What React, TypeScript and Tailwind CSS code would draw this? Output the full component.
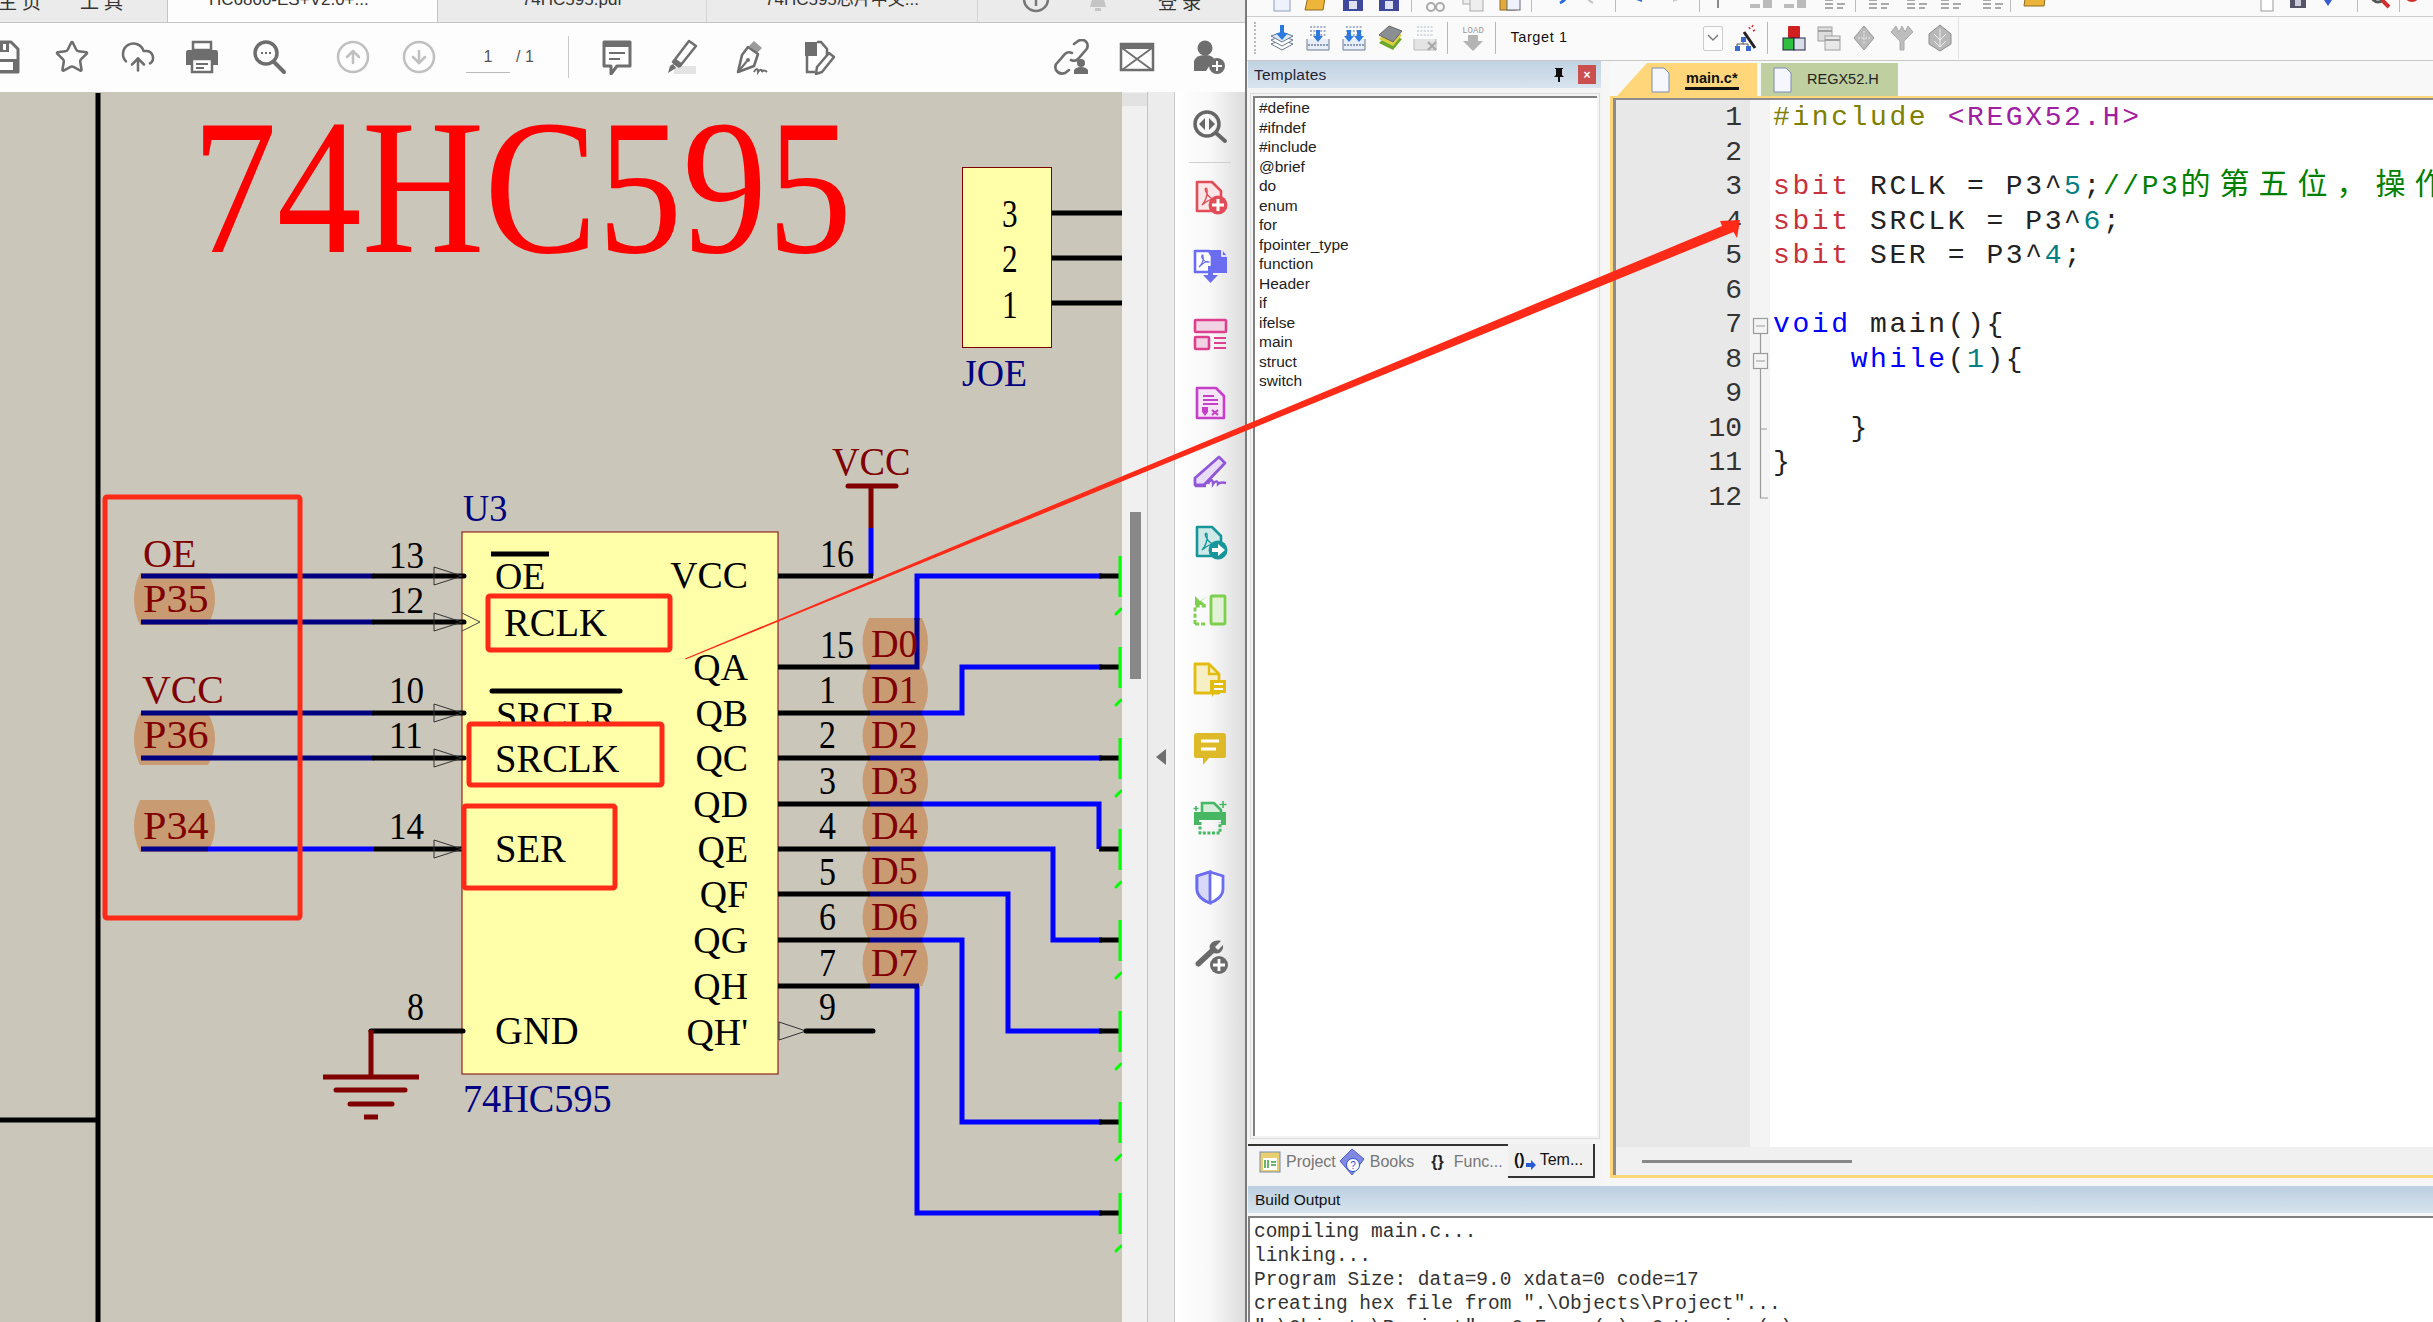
import React from "react";
import { CloudUpload, Star, CircleArrowUp, CircleArrowDown } from "lucide-react";

const G = "#6e6e6e";

type Slot = [number, number, React.ReactNode];
function Slots({ items, className = "" }: { items: Slot[]; className?: string }) {
  let prev = 0;
  return (
    <div className={"flex " + className}>
      {items.map(([c, w, node], i) => {
        const left = c - w / 2;
        const m = left - prev;
        prev = left + w;
        return (
          <div key={i} className="flex shrink-0 items-center justify-center" style={{ marginLeft: m, width: w }}>
            {node}
          </div>
        );
      })}
    </div>
  );
}

const I = ({ children, s = 36, v = 36 }: { children: React.ReactNode; s?: number; v?: number }) => (
  <svg width={s} height={s} viewBox={`0 0 ${v} ${v}`} className="shrink-0">
    {children}
  </svg>
);

/* ---------- PDF toolbar ---------- */
const SaveIco = () => (
  <I>
    <path d="M4 3H26L33 10V33H4Z" fill="none" stroke={G} strokeWidth="3" strokeLinejoin="round" />
    <rect x="10" y="3" width="14" height="10" fill={G} />
    <rect x="18" y="5" width="3" height="6" fill="#fff" />
    <rect x="4" y="20" width="29" height="13" fill={G} />
    <rect x="9" y="23" width="19" height="8" fill="#fff" />
  </I>
);
const PrintIco = () => (
  <I>
    <path d="M9 3H27V11H9Z" fill="none" stroke={G} strokeWidth="2.5" />
    <path d="M4 11H32Q34 11 34 14V26H28V21H8V26H2V14Q2 11 4 11Z" fill={G} />
    <rect x="8" y="20" width="20" height="13" fill="#fff" stroke={G} strokeWidth="2.5" />
    <path d="M12 25H24M12 29H20" stroke={G} strokeWidth="2" />
  </I>
);
const SearchIco = () => (
  <I>
    <circle cx="14" cy="14" r="11" fill="none" stroke={G} strokeWidth="3.5" />
    <path d="M22 23L32 33" stroke={G} strokeWidth="4" strokeLinecap="round" />
    <path d="M9 14H11M13 14H15M17 14H19" stroke={G} strokeWidth="2" />
  </I>
);
const CommentIco = () => (
  <I>
    <path d="M5 3H31V27H18L12 35V27H5Z" fill="#fff" stroke={G} strokeWidth="3" strokeLinejoin="round" />
    <path d="M5 3H31V8H5Z" fill={G} />
    <path d="M10 14H26M10 20H21" stroke={G} strokeWidth="2" />
  </I>
);
const HighlightIco = () => (
  <I>
    <rect x="12" y="27" width="22" height="8" fill="#e3e3e3" />
    <path d="M27 2L34 7L18 27L11 23Z" fill="none" stroke={G} strokeWidth="2.5" strokeLinejoin="round" />
    <path d="M14 20L21 25L17 29L11 25Z" fill={G} />
    <path d="M8 27L11 25L14 29L6 34Z" fill={G} />
  </I>
);
const NibIco = () => (
  <I>
    <path d="M22 2L30 9L25 14L17 7Z" fill="#9a9a9a" />
    <path d="M16 8L26 15L22 27L6 33L10 16Z" fill="none" stroke={G} strokeWidth="2.6" strokeLinejoin="round" />
    <path d="M6 33L15 22" stroke={G} strokeWidth="2" />
    <circle cx="16" cy="21" r="2" fill={G} />
    <path d="M22 33C24 29 26 29 26 33C28 30 30 30 30 33C31 31 33 31 35 33" fill="none" stroke={G} strokeWidth="2" />
  </I>
);
const StampIco = () => (
  <I>
    <path d="M6 3H18V17H6Z" fill={G} />
    <path d="M18 3H22L28 10V17" fill="none" stroke={G} strokeWidth="2.5" />
    <path d="M8 17V33H16" fill="none" stroke={G} strokeWidth="2.5" />
    <path d="M30 14L35 18L23 33L17 35L18 28Z" fill="none" stroke={G} strokeWidth="2.5" strokeLinejoin="round" />
  </I>
);
const LinkIco = () => (
  <I>
    <g fill="none" stroke={G} strokeWidth="2.6" strokeLinecap="round">
      <path d="M20 5L24 2Q30 -1 33 4Q35 9 31 12L24 20Q21 23 17 21" />
      <path d="M15 31L11 34Q5 36 2 31Q0 26 4 23L11 15Q14 12 18 14" />
    </g>
    <circle cx="27" cy="24" r="4" fill={G} />
    <path d="M20 35V31Q22 28 27 28Q32 28 34 31V35Z" fill={G} />
  </I>
);
const MailIco = () => (
  <I>
    <rect x="2" y="5" width="32" height="26" fill="none" stroke={G} strokeWidth="2.5" />
    <rect x="2" y="5" width="32" height="5" fill={G} />
    <path d="M3 9L33 31M33 9L3 31" stroke={G} strokeWidth="1.8" />
  </I>
);
const UserPlusIco = () => (
  <I>
    <circle cx="15" cy="9" r="7.5" fill={G} />
    <path d="M4 30V22Q6 16 15 16Q22 16 24 20L16 32H4Z" fill={G} />
    <circle cx="27" cy="27" r="8" fill={G} />
    <path d="M27 22V32M22 27H32" stroke="#fff" strokeWidth="2" />
  </I>
);

function PdfToolbar() {
  return (
    <div className="h-[69px] overflow-hidden bg-[#fdfdfd]">
      <Slots
        className="h-[69px] items-center pb-[1px]"
        items={[
          [3, 36, <SaveIco />],
          [72, 36, <Star size={36} stroke={G} strokeWidth={1.7} />],
          [138, 36, <CloudUpload size={36} stroke={G} strokeWidth={1.7} />],
          [202, 36, <PrintIco />],
          [270, 36, <SearchIco />],
          [353, 36, <CircleArrowUp size={36} stroke="#c0c0c0" strokeWidth={1.7} />],
          [419, 36, <CircleArrowDown size={36} stroke="#c0c0c0" strokeWidth={1.7} />],
          [
            502,
            72,
            <div className="flex w-[72px] items-center text-[16px] text-[#555]">
              <span className="flex h-[32px] w-[44px] items-center justify-center border-b border-[#bbb] pt-[1px]">1</span>
              <span className="ml-[6px] mb-[1px] whitespace-pre">/ 1</span>
            </div>,
          ],
          [568, 2, <div className="h-[42px] w-px bg-[#c8c8c8]" />],
          [617, 36, <CommentIco />],
          [680, 36, <HighlightIco />],
          [750, 36, <NibIco />],
          [817, 36, <StampIco />],
          [1072, 36, <LinkIco />],
          [1137, 36, <MailIco />],
          [1208, 36, <UserPlusIco />],
        ]}
      />
    </div>
  );
}

function PdfTabs() {
  return (
    <div className="flex h-[23px] overflow-hidden border-b border-[#c4c4c4] bg-[#ebebeb] text-[17px] leading-[20px] text-[#333]">
      <div className="flex w-[167px] items-start text-[19px]">
        <span className="-ml-[2px] -mt-[7px] w-[60px] shrink-0 tracking-[5px]">主页</span>
        <span className="ml-[22px] -mt-[7px] shrink-0 tracking-[5px]">工具</span>
      </div>
      <div className="flex h-[23px] w-[271px] items-start border-x border-[#c4c4c4] bg-[#fdfdfd] pl-[41px]">
        <span className="-mt-[10px] whitespace-pre">HC6800-ES+V2.0+...</span>
        <span className="-mt-[14px] ml-[22px] text-[#888]">×</span>
      </div>
      <div className="flex w-[269px] items-start justify-center border-r border-[#d4d4d4]">
        <span className="-mt-[10px]">74HC595.pdf</span>
      </div>
      <div className="flex w-[271px] items-start justify-center border-r border-[#d4d4d4]">
        <span className="-mt-[10px]">74HC595芯片中文...</span>
      </div>
      <svg width="30" height="22" viewBox="0 0 30 22" className="ml-[43px] shrink-0">
        <circle cx="15" cy="-1" r="12" fill="none" stroke="#777" strokeWidth="2.5" />
        <path d="M15 -2V6" stroke="#777" strokeWidth="2.5" />
      </svg>
      <svg width="30" height="22" viewBox="0 0 30 22" className="ml-[32px] shrink-0">
        <path d="M7 7L10 -4H20L23 7Z M12 8H18V11H12Z" fill="#c4c4c4" />
      </svg>
      <span className="ml-[45px] -mt-[7px] shrink-0 text-[19px] tracking-[5px]">登录</span>
    </div>
  );
}

/* ---------- Schematic ---------- */
const T = ({
  x,
  y,
  c = "#000",
  s = 39,
  sx = 0.97,
  a = "start",
  children,
}: {
  x: number;
  y: number;
  c?: string;
  s?: number;
  sx?: number;
  a?: "start" | "end";
  children: React.ReactNode;
}) => (
  <text transform={`translate(${x} ${y}) scale(${sx} 1)`} fontSize={s} fill={c} textAnchor={a}>
    {children}
  </text>
);
const L = ({ d, c = "#000", w = 5, cap = "butt" }: { d: string; c?: string; w?: number; cap?: "butt" | "round" }) => (
  <path d={d} fill="none" stroke={c} strokeWidth={w} strokeLinecap={cap} strokeLinejoin="miter" />
);
const Tri = ({ x, y, w = 28 }: { x: number; y: number; w?: number }) => (
  <path d={`M${x} ${y - 9}L${x + w} ${y}L${x} ${y + 9}Z`} fill="none" stroke="#333" strokeWidth="1" />
);
const RedBox = ({ x, y, w, h, fill = "none" }: { x: number; y: number; w: number; h: number; fill?: string }) => (
  <rect x={x} y={y} width={w} height={h} rx="2" fill={fill} stroke="#ff2a17" strokeWidth="5" />
);
const HL = "#c99b72";
const LeftBlob = ({ t }: { t: number }) => (
  <path d={`M140 ${t}H208Q222 ${t + 26} 208 ${t + 52}H140Q128 ${t + 26} 140 ${t}Z`} fill={HL} />
);
const RightBlob = ({ t, b }: { t: number; b: number }) => (
  <path d={`M869 ${t}H922Q934 ${(t + b) / 2} 922 ${b}H869Q856 ${(t + b) / 2} 869 ${t}Z`} fill={HL} />
);

const PINY = [667, 713, 758, 804, 849, 894, 940, 986];
const STUBS = [576, 667, 758, 849, 940, 1031, 1122, 1213];

function Schematic() {
  return (
    <svg width="1122" height="1230" viewBox="0 92 1122 1230" className="block shrink-0 bg-[#cac6ba] font-['Liberation_Serif',serif]">
      <L d="M98 93V1322" />
      <L d="M0 1120H98" />
      <T x={192} y={252} s={192} sx={0.884} c="#ff0000">74HC595</T>

      {/* JOE */}
      <rect x="962.5" y="167.5" width="89" height="180" fill="#ffffaa" stroke="#800000" />
      <L d="M1052 213H1122M1052 258H1122M1052 303H1122" />
      <T x={1002} y={227} s={39} sx={0.8}>3</T>
      <T x={1002} y={272} s={39} sx={0.8}>2</T>
      <T x={1002} y={318} s={39} sx={0.8}>1</T>
      <T x={962} y={386} c="#000080" sx={0.97}>JOE</T>

      {/* chip */}
      <T x={463} y={521} c="#000080" sx={0.93}>U3</T>
      <rect x="462" y="532" width="316" height="542" fill="#ffffaa" stroke="#800000" />
      <T x={463} y={1112} c="#000080" sx={0.98}>74HC595</T>

      {/* left highlights */}
      <LeftBlob t={573} />
      <LeftBlob t={713} />
      <LeftBlob t={800} />

      {/* left wires */}
      {[576, 622, 713, 758].map((y) => (
        <g key={y}>
          <L d={`M141 ${y}H374`} c="#000080" />
          <L d={`M374 ${y}H464`} cap="round" />
          <Tri x={434} y={y} />
        </g>
      ))}
      <L d="M141 849H208" c="#00008c" />
      <L d="M208 849H374" c="#0000ff" />
      <L d="M374 849H462" />
      <Tri x={434} y={849} />
      <path d="M462 613L480 622L462 631" fill="none" stroke="#444" strokeWidth="1" />

      {/* left labels */}
      <T x={143} y={567} c="#800000" sx={1.03}>OE</T>
      <T x={143} y={612} c="#800000" sx={1.08}>P35</T>
      <T x={142} y={703} c="#800000" sx={1.02}>VCC</T>
      <T x={143} y={748} c="#800000" sx={1.08}>P36</T>
      <T x={143} y={839} c="#800000" sx={1.08}>P34</T>
      <T x={389} y={568} sx={0.9}>13</T>
      <T x={389} y={613} sx={0.9}>12</T>
      <T x={389} y={703} sx={0.9}>10</T>
      <T x={389} y={748} sx={0.9}>11</T>
      <T x={389} y={839} sx={0.9}>14</T>

      {/* pin names */}
      <L d="M491 554H549" />
      <T x={495} y={589}>OE</T>
      <T x={504} y={636} sx={0.99}>RCLK</T>
      <L d="M492 691H620" cap="round" />
      <T x={496} y={728}>SRCLR</T>
      <T x={495} y={1044} sx={0.99}>GND</T>
      <RedBox x={488} y={596} w={182} h={54} />
      <RedBox x={469} y={724} w={193} h={61} fill="#ffffaa" />
      <RedBox x={464} y={806} w={151} h={82} fill="#ffffaa" />
      <T x={495} y={772} sx={0.99}>SRCLK</T>
      <T x={495} y={862} sx={0.99}>SER</T>

      {/* right labels */}
      <T x={748} y={588} a="end">VCC</T>
      {["QA", "QB", "QC", "QD", "QE", "QF", "QG", "QH"].map((n, i) => (
        <T key={n} x={748} y={PINY[i] + 13} a="end">
          {n}
        </T>
      ))}
      <T x={748} y={1045} a="end">QH'</T>

      {/* right highlights */}
      {PINY.map((b, i) => (
        <RightBlob key={b} t={i === 0 ? 618 : PINY[i - 1]} b={b} />
      ))}

      {/* VCC power */}
      <T x={832} y={475} c="#800000" sx={0.98}>VCC</T>
      <L d="M848 486H896" c="#800000" w={5} cap="round" />
      <L d="M871 486V528" c="#800000" />
      <L d="M871 528V576" c="#0000ff" />
      <L d="M778 576H873" />

      {/* right wires */}
      {PINY.map((y) => (
        <L key={y} d={`M778 ${y}H870`} />
      ))}
      <L d="M917 620V576H1102" c="#0000ff" />
      <L d="M870 667H917V618" c="#000090" />
      <L d="M922 713H962V667H1102" c="#0000ff" />
      <L d="M870 713H922" c="#000090" />
      <L d="M922 758H1102" c="#0000ff" />
      <L d="M870 758H922" c="#000090" />
      <L d="M922 804H1099V849" c="#0000ff" />
      <L d="M870 804H922" c="#000090" />
      <L d="M922 849H1053V940H1102" c="#0000ff" />
      <L d="M870 849H922" c="#000090" />
      <L d="M922 894H1008V1031H1102" c="#0000ff" />
      <L d="M870 894H922" c="#000090" />
      <L d="M922 940H962V1122H1102" c="#0000ff" />
      <L d="M870 940H922" c="#000090" />
      <L d="M917 986V1213H1102" c="#0000ff" />
      <L d="M870 986H919" c="#000090" />

      {/* right connector */}
      {STUBS.map((y) => (
        <g key={y}>
          <L d={`M1099 ${y}H1119`} />
          <L d={`M1120 ${y - 20}V${y + 21}`} c="#00ff00" w={3} />
          <L d={`M1116 ${y + 38}L1121 ${y + 33}`} c="#00ff00" w={3} cap="round" />
        </g>
      ))}

      {/* right numbers */}
      <T x={820} y={567} sx={0.87}>16</T>
      <T x={820} y={658} sx={0.87}>15</T>
      {[
        ["1", 703],
        ["2", 748],
        ["3", 794],
        ["4", 839],
        ["5", 885],
        ["6", 930],
        ["7", 976],
        ["9", 1020],
      ].map(([n, y]) => (
        <T key={n as string} x={819} y={y as number} sx={0.87}>
          {n}
        </T>
      ))}
      {["D0", "D1", "D2", "D3", "D4", "D5", "D6", "D7"].map((n, i) => (
        <T key={n} x={871} y={PINY[i] - 10} c="#800000" sx={0.98}>
          {n}
        </T>
      ))}

      {/* QH' */}
      <Tri x={779} y={1031} w={27} />
      <L d="M806 1031H873" cap="round" />

      {/* GND */}
      <T x={407} y={1020} sx={0.87}>8</T>
      <L d="M371 1031H463" cap="round" />
      <L d="M371 1030V1077" c="#800000" />
      <L d="M323 1077H419" c="#800000" />
      <L d="M336 1090H405" c="#800000" cap="round" />
      <L d="M350 1104H392" c="#800000" cap="round" />
      <L d="M364 1117H378" c="#800000" />

      {/* annotation */}
      <RedBox x={105} y={497} w={195} h={421} />
    </svg>
  );
}

/* ---------- PDF right sidebar ---------- */
const DOC = "M5 3H20L29 12V32H5Z";
const Acro = ({ c }: { c: string }) => (
  <path d="M10 26C13 23 16 16 15 11C15 8 12 9 14 13C16 17 20 21 25 20C22 19 16 21 10 26Z" fill="none" stroke={c} strokeWidth="1.4" />
);
const Side = {
  search: (
    <I>
      <circle cx="15" cy="15" r="12" fill="none" stroke="#666" strokeWidth="3.5" />
      <path d="M24 24L33 32" stroke="#666" strokeWidth="4" strokeLinecap="round" />
      <path d="M13 9V21L7 15Z M17 9V21L23 15Z" fill="#666" />
    </I>
  ),
  red: (
    <I>
      <path d={DOC} fill="#fbe6e7" stroke="#e04d57" strokeWidth="2.6" strokeLinejoin="round" />
      <Acro c="#e04d57" />
      <circle cx="26" cy="26" r="9.5" fill="#e04d57" />
      <path d="M26 20V32M20 26H32" stroke="#fff" strokeWidth="3" />
    </I>
  ),
  blue: (
    <I>
      <path d="M17 2H30L35 8V25H19Z" fill="#6a6df0" />
      <path d="M30 2V8H35" fill="none" stroke="#fff" strokeWidth="1.5" />
      <path d="M3 3H17L20 8V24H3Z" fill="#fff" stroke="#6a6df0" strokeWidth="2.6" strokeLinejoin="round" />
      <path d="M7 19C10 16 12 12 11 8C11 6 9 7 10 10C12 13 14 15 17 14C15 13 11 15 7 19Z" fill="none" stroke="#6a6df0" strokeWidth="1.2" />
      <path d="M16 18H21V27H26L18.5 35L11 27H16Z" fill="#6a6df0" />
    </I>
  ),
  pink: (
    <I>
      <rect x="3" y="3" width="31" height="12" rx="1" fill="#f2d3e3" stroke="#dd3f8e" strokeWidth="2.6" />
      <rect x="3" y="20" width="14" height="12" rx="1" fill="#f2d3e3" stroke="#dd3f8e" strokeWidth="2.6" />
      <path d="M22 21H34M22 26H34M22 31H34" stroke="#dd3f8e" strokeWidth="2" />
    </I>
  ),
  purpleDoc: (
    <I>
      <path d="M5 2H24L32 10V32H5Z" fill="#f6e4f7" stroke="#c53fc8" strokeWidth="2.6" strokeLinejoin="round" />
      <path d="M11 10H22M11 14H26M11 18H26" stroke="#c53fc8" strokeWidth="1.8" />
      <path d="M10 21H16V26L13 30L10 26Z" fill="#c53fc8" />
      <path d="M20 24L26 29M26 24L20 29" stroke="#c53fc8" strokeWidth="2.2" />
    </I>
  ),
  sign: (
    <I>
      <path d="M27 2L33 8L12 30H3V23Z" fill="#e8dcf7" stroke="#9058d8" strokeWidth="2.8" strokeLinejoin="round" />
      <path d="M3 31H14M16 29C18 24 21 24 21 29C23 26 26 25 26 29C28 27 30 27 34 28" fill="none" stroke="#9058d8" strokeWidth="2.4" />
    </I>
  ),
  teal: (
    <I>
      <path d={DOC} fill="#cfe8e8" stroke="#16969a" strokeWidth="2.6" strokeLinejoin="round" />
      <Acro c="#16969a" />
      <circle cx="26" cy="26" r="9.5" fill="#16969a" />
      <path d="M20 24H26V20L33 26L26 32V28H20Z" fill="#fff" />
    </I>
  ),
  green: (
    <I>
      <rect x="19" y="3" width="14" height="28" rx="1" fill="#e3f1d6" stroke="#7fcf4f" strokeWidth="2.8" />
      <path d="M3 31V13H15M3 31H15" fill="none" stroke="#7fcf4f" strokeWidth="3" strokeDasharray="4 2.2" />
      <path d="M16 3L8 8L3 3V12H14L9 8" fill="#7fcf4f" />
    </I>
  ),
  yellowDoc: (
    <I>
      <path d="M3 2H17L27 12V31H3Z" fill="#f6efc6" stroke="#e3bc10" strokeWidth="2.8" strokeLinejoin="round" />
      <path d="M17 2V12H27" fill="none" stroke="#e3bc10" strokeWidth="2.4" />
      <path d="M18 18H34V31H23L20 35V31H18Z" fill="#e3bc10" />
      <path d="M22 22H31M22 27H31" stroke="#fff" strokeWidth="2" />
    </I>
  ),
  yellowMsg: (
    <I>
      <path d="M5 2H31Q34 2 34 5V25Q34 27 31 27H17L11 34V27H5Q2 27 2 25V5Q2 2 5 2Z" fill="#deba28" />
      <path d="M9 10H27M9 18H24" stroke="#fff" strokeWidth="3" />
    </I>
  ),
  greenPrint: (
    <I>
      <path d="M10 14V3H22L29 10V14" fill="#d5ecd8" stroke="#47b764" strokeWidth="2.6" />
      <path d="M2 12H34V25H29V20H7V25H2Z" fill="#47b764" />
      <path d="M8 22V33H28V22" fill="none" stroke="#47b764" strokeWidth="3" strokeDasharray="3 1.6" />
      <path d="M31 1V8M27.5 4.5H34.5M4 6V11M1.5 8.5H6.5" stroke="#47b764" strokeWidth="1.6" />
    </I>
  ),
  shield: (
    <I>
      <path d="M18 3L31 7V20C31 27 24 32 18 34C12 32 5 27 5 20V7Z" fill="#fff" stroke="#6a6df0" strokeWidth="2.8" />
      <path d="M18 3V34C12 32 5 27 5 20V7Z" fill="#d8d9f7" stroke="#6a6df0" strokeWidth="2.8" />
    </I>
  ),
  wrench: (
    <I>
      <path d="M29 3L23 9L26 12L31 7C32 13 27 17 22 15L8 28C6 30 2 27 4 24L18 11C16 6 22 1 29 3Z" fill="#6a6a6a" />
      <circle cx="27" cy="27" r="9" fill="#6a6a6a" />
      <path d="M27 21V33M21 27H33" stroke="#fff" strokeWidth="2.8" />
    </I>
  ),
};

function PdfSidebar() {
  return (
    <div className="flex w-[70px] shrink-0 flex-col items-center bg-gradient-to-r from-[#ffffff] via-[#f8f8f8] to-[#dcdcdc] pt-[17px]">
      {Side.search}
      <div className="mt-[17px] h-px w-[42px] shrink-0 bg-[#cfcfcf]" />
      <div className="mt-[16px] flex flex-col items-center gap-[33px]">
        {Side.red}
        {Side.blue}
        {Side.pink}
        {Side.purpleDoc}
        {Side.sign}
        {Side.teal}
        {Side.green}
        {Side.yellowDoc}
        {Side.yellowMsg}
        {Side.greenPrint}
        {Side.shield}
        {Side.wrench}
      </div>
    </div>
  );
}

/* ---------- Keil ---------- */
const K = {
  page: <svg width="18" height="24" viewBox="0 0 18 24"><rect x="1" y="1" width="16" height="22" fill="#eef2fa" stroke="#8c9cc0" /></svg>,
  open: <svg width="24" height="24" viewBox="0 0 24 24"><path d="M5 4H22L19 22H1Z" fill="#eeb53a" stroke="#8a6a20" /></svg>,
  save: <svg width="22" height="24" viewBox="0 0 22 24"><rect x="1" y="1" width="20" height="22" fill="#40489c" /><rect x="7" y="13" width="8" height="8" fill="#dfe2f4" /></svg>,
  copy: <svg width="22" height="24" viewBox="0 0 22 24"><rect x="1" y="1" width="13" height="15" fill="#eee" stroke="#aaa" /><rect x="8" y="8" width="13" height="15" fill="#eee" stroke="#aaa" /></svg>,
  cut: <svg width="20" height="24" viewBox="0 0 20 24"><circle cx="6" cy="19" r="4" fill="none" stroke="#aaa" strokeWidth="2" /><circle cx="15" cy="19" r="4" fill="none" stroke="#aaa" strokeWidth="2" /></svg>,
  paste: <svg width="22" height="24" viewBox="0 0 22 24"><rect x="1" y="2" width="16" height="20" fill="#e3aa3a" stroke="#8a6a20" /><rect x="8" y="9" width="13" height="13" fill="#eef2fa" stroke="#667" /></svg>,
  undo: <svg width="16" height="24" viewBox="0 0 16 24"><path d="M13 2C13 9 9 13 5 15" fill="none" stroke="#2a6ad8" strokeWidth="3" /></svg>,
  redo: <svg width="16" height="24" viewBox="0 0 16 24"><path d="M3 2C3 9 7 13 11 15" fill="none" stroke="#c4c4c4" strokeWidth="2" /></svg>,
  back: <svg width="16" height="24" viewBox="0 0 16 24"><path d="M3 10L14 14L14 6Z" fill="#2a6ad8" /></svg>,
  fwd: <svg width="16" height="24" viewBox="0 0 16 24"><path d="M14 10L3 14L3 6Z" fill="#ccc" /></svg>,
  flag: <svg width="14" height="24" viewBox="0 0 14 24"><path d="M5 2H9V12H7V20H5Z" fill="#8a8a8a" /></svg>,
  grayA: <svg width="24" height="24" viewBox="0 0 24 24"><path d="M1 16H11V20H1ZM14 12H23V20H14Z" fill="#bbb" /></svg>,
  grayB: <svg width="24" height="24" viewBox="0 0 24 24"><path d="M2 12H10M2 16H10M2 20H10M14 16H22M14 20H20" stroke="#aaa" strokeWidth="2" /></svg>,
  folder: <svg width="24" height="24" viewBox="0 0 24 24"><path d="M3 4H23L21 18H1Z" fill="#e9b438" stroke="#8a6a20" /></svg>,
  sdoc: <svg width="14" height="24" viewBox="0 0 14 24"><rect x="1" y="1" width="12" height="22" fill="#fff" stroke="#999" /></svg>,
  bino: <svg width="20" height="24" viewBox="0 0 20 24"><path d="M2 1H18V20H2Z" fill="#556" /><rect x="7" y="10" width="6" height="8" fill="#ccd" /></svg>,
  blueDown: <svg width="20" height="24" viewBox="0 0 20 24"><path d="M2 6H18L10 18Z" fill="#3a5ad0" /></svg>,
  find: <svg width="22" height="24" viewBox="0 0 22 24"><circle cx="9" cy="8" r="6" fill="none" stroke="#555" strokeWidth="3" /><path d="M13 12L20 19" stroke="#d03030" strokeWidth="4" /></svg>,
  redc: <svg width="22" height="24" viewBox="0 0 22 24"><circle cx="11" cy="6" r="8" fill="#d03030" /></svg>,
};
const dots = (x: number) => (
  <g>
    {[2, 6, 10].map((y) => (
      <path key={y} d={`M${x} ${y}h16`} stroke="#8a9ab8" strokeWidth="1.4" strokeDasharray="2 1.4" />
    ))}
  </g>
);
const Arrow = ({ x, c = "#2a7ae0" }: { x: number; c?: string }) => <path d={`M${x - 2} 5h4v6h3l-5 6l-5 -6h3z`} fill={c} />;
const K2 = {
  stack: (
    <svg width="26" height="28" viewBox="0 0 26 28">
      <path d="M13 16L24 20L13 26L2 20Z" fill="#fff" stroke="#6a7a90" />
      <path d="M13 12L24 16L13 22L2 16Z" fill="#fff" stroke="#6a7a90" />
      <path d="M13 8L24 12L13 18L2 12Z" fill="#dfe8f4" stroke="#6a7a90" />
      <path d="M11 1h4v8h4l-6 7l-6 -7h4z" fill="#2a7ae0" />
    </svg>
  ),
  one: (
    <svg width="26" height="26" viewBox="0 0 26 26">
      {dots(5)}
      <path d="M2 14V25H24V14" fill="#e8eef6" stroke="#6a7a90" />
      <path d="M3 20h20" stroke="#8a9ab8" strokeDasharray="2 1" strokeWidth="2" />
      <Arrow x={13} />
    </svg>
  ),
  two: (
    <svg width="26" height="26" viewBox="0 0 26 26">
      {dots(5)}
      <path d="M2 14V25H24V14" fill="#e8eef6" stroke="#6a7a90" />
      <path d="M3 20h20" stroke="#8a9ab8" strokeDasharray="2 1" strokeWidth="2" />
      <Arrow x={8} />
      <Arrow x={18} />
    </svg>
  ),
  layers: (
    <svg width="26" height="28" viewBox="0 0 26 28">
      <path d="M2 19L16 26L25 15L12 9Z" fill="#6aa82a" />
      <path d="M2 15L16 22L25 11L12 5Z" fill="#e0d040" />
      <path d="M2 11L16 18L25 7L12 2Z" fill="#8a8f94" stroke="#666" />
    </svg>
  ),
  disabled: (
    <svg width="26" height="26" viewBox="0 0 26 26">
      <g opacity=".45">{dots(5)}</g>
      <path d="M2 14V25H24V14" fill="#e4e4e4" stroke="#bbb" />
      <path d="M16 17L24 25M24 17L16 25" stroke="#aaa" strokeWidth="2.4" />
    </svg>
  ),
  load: (
    <svg width="26" height="28" viewBox="0 0 26 28">
      <text x="13" y="9" textAnchor="middle" fontSize="9" fill="#999" fontFamily="Liberation Mono, monospace">LOAD</text>
      <path d="M8 11h10v6h5l-10 10l-10 -10h5z" fill="#b4b4b4" />
    </svg>
  ),
  wand: (
    <svg width="26" height="28" viewBox="0 0 26 28">
      <path d="M12 8L23 24" stroke="#222" strokeWidth="3" />
      <path d="M17 3l1 2M23 6l-2 1M21 1l-1 2" stroke="#d03030" strokeWidth="1.6" />
      <rect x="9" y="13" width="5" height="5" fill="#3a6ad0" />
      <rect x="3" y="22" width="5" height="5" fill="#3a6ad0" />
      <rect x="14" y="22" width="5" height="5" fill="#3a6ad0" />
      <path d="M11 18V20H5V22M11 20H16V22" fill="none" stroke="#555" />
    </svg>
  ),
  blocks: (
    <svg width="24" height="28" viewBox="0 0 24 28">
      <rect x="6" y="2" width="12" height="12" rx="1" fill="#d02020" />
      <rect x="1" y="14" width="11" height="12" fill="#30c040" stroke="#224" />
      <rect x="12" y="14" width="11" height="12" fill="#d8dde8" stroke="#224" />
    </svg>
  ),
  win: (
    <svg width="24" height="28" viewBox="0 0 24 28">
      <rect x="1" y="3" width="14" height="14" fill="#ddd" stroke="#a0a0a0" />
      <rect x="8" y="12" width="15" height="14" fill="#e8e8e8" stroke="#a0a0a0" />
      <path d="M1 7h14M8 16h15" stroke="#a0a0a0" strokeWidth="2" />
    </svg>
  ),
  dia: (
    <svg width="22" height="28" viewBox="0 0 22 28">
      <path d="M11 2L21 14L11 26L1 14Z" fill="#bbb" stroke="#999" />
      <path d="M5 14h12M11 7v14" stroke="#eee" strokeDasharray="2 1.5" />
    </svg>
  ),
  funnel: (
    <svg width="24" height="28" viewBox="0 0 24 28">
      <path d="M1 8L6 2L9 8L12 2L15 8L18 2L23 8L14 17V26H10V17Z" fill="#bdbdbd" stroke="#aaa" />
    </svg>
  ),
  hex: (
    <svg width="24" height="28" viewBox="0 0 24 28">
      <path d="M12 1L23 10V20L12 27L1 20V10Z" fill="#b8b8b8" stroke="#8e8e8e" />
      <path d="M6 10L12 16L18 10M6 17L12 23L18 17M12 5V22" fill="none" stroke="#eee" />
    </svg>
  ),
};

function KeilToolbars() {
  const sep = <div className="h-[22px] w-px bg-[#bdbdbd]" />;
  const sep2 = <div className="h-[32px] w-px bg-[#b8b8b8]" />;
  return (
    <>
      <div className="flex h-[16px] shrink-0 items-end overflow-hidden bg-[#fafafa] pb-[4px]">
        <Slots
          className="items-end"
          items={[
            [35, 18, K.page],
            [69, 24, K.open],
            [106, 22, K.save],
            [142, 22, K.save],
            [164, 2, sep],
            [188, 20, K.cut],
            [226, 22, K.copy],
            [263, 22, K.paste],
            [284, 2, sep],
            [316, 16, K.undo],
            [343, 16, K.redo],
            [368, 2, sep],
            [389, 16, K.back],
            [431, 16, K.fwd],
            [452, 2, sep],
            [472, 14, K.flag],
            [514, 24, K.grayA],
            [548, 24, K.grayA],
            [588, 24, K.grayB],
            [608, 2, sep],
            [632, 24, K.grayB],
            [670, 24, K.grayB],
            [704, 24, K.grayB],
            [746, 24, K.grayB],
            [763, 2, sep],
            [788, 24, K.folder],
            [1020, 14, K.sdoc],
            [1051, 20, K.bino],
            [1081, 20, K.blueDown],
            [1110, 2, sep],
            [1133, 22, K.find],
            [1152, 2, sep],
            [1165, 22, K.redc],
          ]}
        />
      </div>
      <div className="h-px shrink-0 bg-[#cdcdcd]" />
      <div className="flex h-[43px] shrink-0 bg-[#fafafa]">
        <div className="flex h-[42px] w-[712px] items-center border-r border-[#e2e2e2] text-[14.5px] text-[#111]">
          <Slots
            className="h-[42px] items-center"
            items={[
              [8, 4, <div className="h-[32px] w-[2px] border-l-2 border-dotted border-[#bbb]" />],
              [35, 26, K2.stack],
              [71, 26, K2.one],
              [107, 26, K2.two],
              [143, 26, K2.layers],
              [178, 26, K2.disabled],
              [200, 2, sep2],
              [226, 26, K2.load],
              [248, 2, sep2],
              [292, 68, <span className="whitespace-pre tracking-[0.6px]">Target 1</span>],
              [466, 20, <span className="flex h-[25px] w-[20px] items-center justify-center rounded-[2px] border border-[#ccc] bg-[#fcfcfc]"><svg width="12" height="8" viewBox="0 0 12 8"><path d="M1 1L6 6L11 1" fill="none" stroke="#777" strokeWidth="1.4" /></svg></span>],
              [498, 26, K2.wand],
              [520, 2, sep2],
              [547, 24, K2.blocks],
              [582, 24, K2.win],
              [617, 22, K2.dia],
              [655, 24, K2.funnel],
              [693, 24, K2.hex],
            ]}
          />
        </div>
      </div>
      <div className="h-px shrink-0 bg-[#c8c8c8]" />
    </>
  );
}

const TEMPLATES = ["#define", "#ifndef", "#include", "@brief", "do", "enum", "for", "fpointer_type", "function", "Header", "if", "ifelse", "main", "struct", "switch"];

const MiniProject = (
  <svg width="22" height="22" viewBox="0 0 22 22" className="shrink-0">
    <rect x="1" y="1" width="20" height="20" fill="#e8d070" stroke="#7a8ab0" />
    <rect x="4" y="7" width="14" height="12" fill="#fff" />
    <path d="M6 9V17M9 9V17M12 11H17M12 14H17" stroke="#3a9a3a" strokeWidth="1.5" />
  </svg>
);
const MiniBooks = (
  <svg width="26" height="28" viewBox="0 0 26 28" className="shrink-0">
    <path d="M13 1L25 11L13 27L1 13Z" fill="#8088e0" stroke="#5060c0" />
    <circle cx="14" cy="17" r="6.5" fill="#fff" stroke="#3050d0" />
    <text x="14" y="21" fontSize="10" textAnchor="middle" fill="#3050d0">?</text>
  </svg>
);

function TemplatesPanel() {
  return (
    <div className="flex w-[354px] shrink-0 flex-col bg-[#f4f4f4] pl-[1px]">
      <div className="flex h-[27px] shrink-0 items-center bg-gradient-to-b from-[#c0d2e2] to-[#d8e4ee] pl-[6px] pr-[5px] text-[15.5px] text-[#223]">
        <span className="tracking-[0.2px]">Templates</span>
        <svg width="14" height="16" viewBox="0 0 14 16" className="ml-auto">
          <path d="M3 1H11V2H10V8L12 10H8V15H6V10H2L4 8V2H3Z" fill="#111" />
        </svg>
        <div className="ml-[12px] flex h-[19px] w-[18px] items-center justify-center bg-[#c9504f] text-[12px] font-bold leading-none text-white">×</div>
      </div>
      <div className="ml-[2px] mr-[1px] mt-[5px] h-[1046px] shrink-0 border border-[#dcdcdc] p-[2px]">
        <div className="h-full border-l-2 border-t-2 border-[#808080] bg-white pl-[4px]">
          {TEMPLATES.map((t) => (
            <div key={t} className="h-[19.5px] text-[15.5px] leading-[19.5px] text-[#222]">
              {t}
            </div>
          ))}
        </div>
      </div>
      <div className="mt-[5px] flex h-[34px] shrink-0">
        <div className="flex h-[34px] w-[260px] items-center border-t-2 border-[#333] pl-[11px] text-[16px] text-[#777]">
          {MiniProject}
          <span className="ml-[5px]">Project</span>
          <span className="ml-[3px]">{MiniBooks}</span>
          <span className="ml-[5px]">Books</span>
          <span className="ml-[17px] font-bold text-[#222]">{"{}"}</span>
          <span className="ml-[10px]">Func...</span>
        </div>
        <div className="flex h-[34px] w-[87px] items-center border-b-2 border-r-2 border-[#333] bg-[#f0f0f0] pl-[6px] text-[16px] text-[#111]">
          <span className="font-bold">()</span>
          <svg width="12" height="12" viewBox="0 0 12 12" className="mt-[10px]">
            <path d="M1 4H6V1L11 6L6 11V8H1Z" fill="#2a5ad8" />
          </svg>
          <span className="ml-[3px]">Tem...</span>
        </div>
      </div>
      <div className="flex-1" />
    </div>
  );
}

const CJK = "font-['Noto_Sans_CJK_SC',sans-serif] text-[30px] leading-[0px] tracking-[9px] text-[#008000]";
const C = ({ c, children }: { c: string; children: React.ReactNode }) => <span style={{ color: c }}>{children}</span>;
const SB = "#c8303c";
const TEAL = "#008080";
const CODE: React.ReactNode[] = [
  <>
    <C c="#808000">#include</C> <C c="#a020a0">&lt;REGX52.H&gt;</C>
  </>,
  "",
  <>
    <C c={SB}>sbit</C> RCLK = P3^<C c={TEAL}>5</C>;<C c="#008000">//P3</C>
    <span className={CJK}>的第五位，操作</span>
  </>,
  <>
    <C c={SB}>sbit</C> SRCLK = P3^<C c={TEAL}>6</C>;
  </>,
  <>
    <C c={SB}>sbit</C> SER = P3^<C c={TEAL}>4</C>;
  </>,
  "",
  <>
    <C c="#0000ff">void</C> main(){"{"}
  </>,
  <>
    {"    "}
    <C c="#0000ff">while</C>(<C c={TEAL}>1</C>){"{"}
  </>,
  "",
  "    }",
  "}",
  "",
];

function DocTabIcon() {
  return (
    <svg width="19" height="26" viewBox="0 0 19 26" className="shrink-0">
      <path d="M1 1H13L18 6V25H1Z" fill="#f5f7fc" stroke="#7a8cb0" />
    </svg>
  );
}

function Editor() {
  return (
    <div className="ml-[9px] flex min-w-0 flex-1 flex-col">
      <div className="flex h-[35px] shrink-0 items-end bg-[#f8f8f8]">
        <div className="ml-[7px] flex h-[33px] w-[140px] items-center bg-[#ffd77a] pl-[34px] text-[14.5px] font-bold text-[#111] [clip-path:polygon(30px_0,100%_0,100%_100%,0_100%)]">
          <DocTabIcon />
          <span className="ml-[15px] border-b-[3px] border-[#111] px-[1px] leading-[18px]">main.c*</span>
        </div>
        <div className="ml-[4px] flex h-[33px] w-[137px] items-center bg-[#bfcfa0] pl-[12px] text-[14.5px] text-[#222]">
          <DocTabIcon />
          <span className="ml-[15px]">REGX52.H</span>
        </div>
      </div>
      <div className="flex min-h-0 flex-1 flex-col border-x-0 border-b-[3px] border-l-[3px] border-t-[2px] border-[#ffd77a]">
        <div className="flex min-h-0 flex-1 flex-col border-l-[3px] border-t-2 border-[#8c8c8c]">
          <div className="flex min-h-0 flex-1">
            <div className="w-[134px] shrink-0 bg-[#e8e8e8] pr-[8px] pt-[1px] text-right font-['Liberation_Mono',monospace] text-[28px] leading-[34.5px] text-[#333]">
              {CODE.map((_, i) => (
                <div key={i} className="h-[34.5px]">
                  {i + 1}
                </div>
              ))}
            </div>
            <div className="w-[20px] shrink-0 bg-[#f4f4f4]">
              <svg width="20" height="420" viewBox="0 0 20 420">
                <g fill="none" stroke="#9a9a9a" strokeWidth="1.2">
                  <path d="M10.5 233V398H18M10.5 329H17" />
                  <rect x="3.5" y="218.5" width="14" height="15" fill="#f4f4f4" />
                  <rect x="3.5" y="253.5" width="14" height="15" fill="#f4f4f4" />
                  <path d="M6 226H15M6 261H15" />
                </g>
              </svg>
            </div>
            <div className="min-w-0 flex-1 overflow-hidden bg-white pl-[3px] pt-[1px] font-['Liberation_Mono',monospace] text-[28px] leading-[34.5px] tracking-[2.6px] text-[#222]">
              {CODE.map((l, i) => (
                <div key={i} className="h-[34.5px] overflow-visible whitespace-pre">
                  {l}
                </div>
              ))}
            </div>
          </div>
          <div className="flex h-[28px] shrink-0 items-center bg-[#f0f0f0] pl-[26px]">
            <div className="h-[3px] w-[210px] bg-[#888]" />
          </div>
        </div>
      </div>
      <div className="h-[8px] shrink-0" />
    </div>
  );
}

function BuildOutput() {
  const lines = [
    "compiling main.c...",
    "linking...",
    "Program Size: data=9.0 xdata=0 code=17",
    'creating hex file from ".\\Objects\\Project"...',
    '".\\Objects\\Project" - 0 Error(s), 0 Warning(s).',
  ];
  return (
    <div className="flex min-h-0 flex-1 flex-col pl-[1px]">
      <div className="flex h-[27px] shrink-0 items-center bg-gradient-to-b from-[#bccfe0] to-[#d6e3ed] pl-[7px] text-[15.5px] text-[#111]">Build Output</div>
      <div className="mt-[3px] flex-1 border-l-2 border-t-2 border-[#808080] bg-white pl-[4px] pt-[2px] font-['Liberation_Mono',monospace] text-[19.5px] leading-[24px] text-[#333]">
        {lines.map((l) => (
          <div key={l} className="whitespace-pre">
            {l}
          </div>
        ))}
      </div>
    </div>
  );
}

export default function App() {
  return (
    <div className="relative flex h-[1322px] w-[2433px] overflow-hidden bg-[#f6f6f6] font-['Liberation_Sans','Noto_Sans_CJK_SC',sans-serif]">
      <div className="flex h-full w-[1245px] shrink-0 flex-col">
        <PdfTabs />
        <PdfToolbar />
        <div className="flex h-[1230px] shrink-0">
          <Schematic />
          <div className="flex w-[26px] shrink-0 flex-col border-r border-[#c4c4c4] bg-[#f0f0f0]">
            <div className="mt-[1px] h-[13px] w-full bg-[#e2e2e2]" />
            <div className="ml-[8px] mt-[406px] h-[167px] w-[11px] bg-[#888]" />
          </div>
          <div className="flex w-[27px] shrink-0 flex-col items-center border-r border-[#c8c8c8] bg-[#ececec] pt-[657px]">
            <svg width="10" height="16" viewBox="0 0 10 16">
              <path d="M10 0V16L0 8Z" fill="#6e6e6e" />
            </svg>
          </div>
          <PdfSidebar />
        </div>
      </div>
      <div className="h-full w-[2px] shrink-0 bg-[#7a7a7a]" />
      <div className="flex h-full min-w-0 flex-1 flex-col">
        <KeilToolbars />
        <div className="flex h-[1125px] shrink-0">
          <TemplatesPanel />
          <Editor />
        </div>
        <BuildOutput />
      </div>
      <svg className="pointer-events-none absolute left-0 top-0" width="2433" height="1322" viewBox="0 0 2433 1322">
        <path d="M685 658.5L1722 226L1720 221L1740 220L1737 238L1733.5 232L685.5 659.5Z" fill="#ff2a17" />
      </svg>
    </div>
  );
}
